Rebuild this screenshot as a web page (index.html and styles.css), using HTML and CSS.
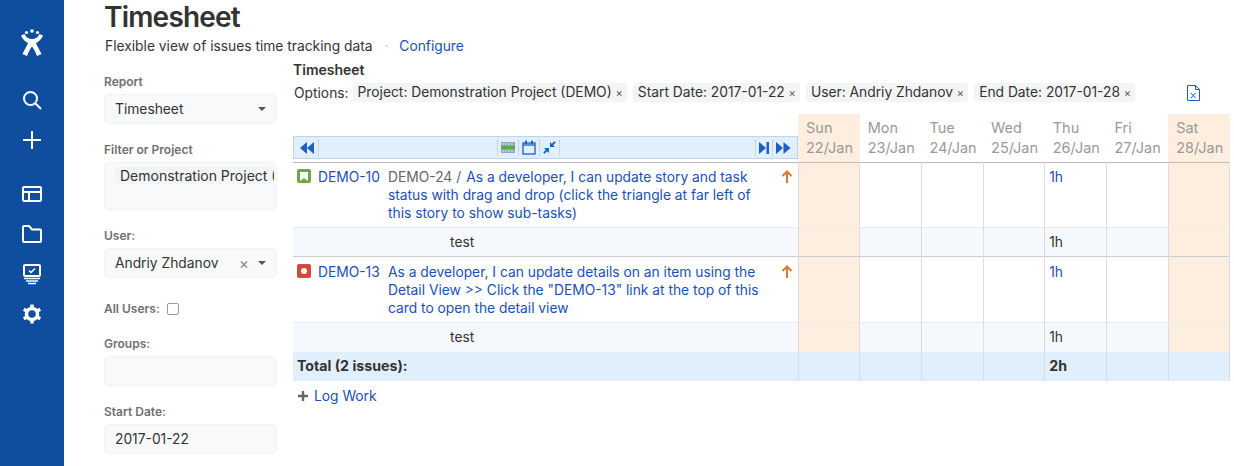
FILE: index.html
```html
<!DOCTYPE html>
<html lang="en">
<head>
    <meta charset="UTF-8">
    <title>Timesheet</title>
    <link rel="stylesheet" href="styles.css">
</head>
<body>
    <nav class="sidebar">
        <svg class="logo" width="22" height="27" viewBox="0 0 22 27" fill="#fff">
            <circle cx="11" cy="2" r="1.800"/><circle cx="5.500" cy="3.500" r="1.600"/><circle cx="16.500" cy="3.500" r="1.600"/>
            <path d="M0 6.500 L3.500 5 C5 8.500 7.500 10 11 10 C14.500 10 17 8.500 18.500 5 L22 6.500 C20.500 10 18 12.500 15 14 C16.500 17.500 18.500 21 20.500 25 L16 27 C14.500 23 13 20 11 17.500 C9 20 7.500 23 6 27 L1.500 25 C3.500 21 5.500 17.500 7 14 C4 12.500 1.500 10 0 6.500 Z"/>
        </svg>
        <svg class="nav-icon first" width="22" height="22" viewBox="0 0 22 22" fill="none" stroke="#fff" stroke-width="2"><circle cx="9.500" cy="9.500" r="6.500"/><path d="M14.500 14.500 L20 20"/></svg>
        <svg class="nav-icon" width="22" height="22" viewBox="0 0 22 22" fill="none" stroke="#fff" stroke-width="2"><path d="M11 2 V20 M2 11 H20"/></svg>
        <svg class="nav-icon second" width="22" height="22" viewBox="0 0 22 22" fill="none" stroke="#fff" stroke-width="2"><rect x="2" y="4" width="18" height="14" rx="1"/><path d="M2 9 H20 M8 9 V18"/></svg>
        <svg class="nav-icon" width="22" height="22" viewBox="0 0 22 22" fill="none" stroke="#fff" stroke-width="2"><path d="M2 18 V4 C2 3.500 2.500 3 3 3 H8 L11 6.500 H19 C19.500 6.500 20 7 20 7.500 V18 C20 18.500 19.500 19 19 19 H3 C2.500 19 2 18.500 2 18 Z"/></svg>
        <svg class="nav-icon" width="22" height="22" viewBox="0 0 22 22" fill="none" stroke="#fff" stroke-width="2"><rect x="3" y="2" width="16" height="11" rx="1"/><path d="M8 7.500 L10 9.500 L14 5.500" stroke-width="1.500"/><path d="M3 15.500 H19 M5 18 H17 M7 20.500 H15" stroke-width="1.500"/></svg>
        <svg class="nav-icon" width="22" height="22" viewBox="0 0 22 22" fill="none" stroke="#fff"><circle cx="11" cy="11" r="5.500" stroke-width="3.500"/><path d="M11 1.500 V4.500 M11 17.500 V20.500 M2.800 6.250 L5.400 7.750 M16.600 14.250 L19.200 15.750 M2.800 15.750 L5.400 14.250 M16.600 7.750 L19.200 6.250" stroke-width="3.500"/></svg>
    </nav>

    <main class="main">
        <h1>Timesheet</h1>
        <p class="subtitle">Flexible view of issues time tracking data <span class="dot">·</span> <a href="#">Configure</a></p>

        <div class="content">
            <form class="form">
                <label>Report</label>
                <div class="field"><span class="grow">Timesheet</span><span class="caret"></span></div>

                <label>Filter or Project</label>
                <div class="field tall"><span class="tag">Demonstration Project (DEMO)</span></div>

                <label>User:</label>
                <div class="field"><span class="grow">Andriy Zhdanov</span><span class="clear">×</span><span class="caret"></span></div>

                <div class="check-row"><label>All Users:</label><span class="checkbox"></span></div>

                <label>Groups:</label>
                <div class="field"></div>

                <label>Start Date:</label>
                <div class="field">2017-01-22</div>
            </form>

            <section class="report">
                <h2>Timesheet</h2>
                <div class="options">
                    <span class="options-label">Options:</span>
                    <span class="chip">Project: Demonstration Project (DEMO) <b>×</b></span>
                    <span class="chip">Start Date: 2017-01-22 <b>×</b></span>
                    <span class="chip">User: Andriy Zhdanov <b>×</b></span>
                    <span class="chip">End Date: 2017-01-28 <b>×</b></span>
                    <svg class="xls" width="13" height="16" viewBox="0 0 13 16" fill="none" stroke="#1a5fc4"><path d="M.5.500 H8.500 L12.500 4.500 V15.500 H.5 Z M8.500.500 V4.500 H12.500"/><path d="M4 8 L8.500 13 M8.500 8 L4 13"/></svg>
                </div>

                <table class="sheet">
                    <colgroup>
                        <col class="col-issue">
                        <col class="col-day"><col class="col-day"><col class="col-day"><col class="col-day"><col class="col-day"><col class="col-day"><col class="col-day">
                    </colgroup>
                    <thead>
                        <tr>
                            <th class="tool-cell">
                                <div class="toolbar">
                                    <svg width="16" height="12" viewBox="0 0 16 12" fill="#1a5fc4"><path d="M8 0 V12 L1 6 Z M15 0 V12 L8 6 Z"/></svg>
                                    <span class="sep"></span>
                                    <span class="grow"></span>
                                    <span class="sep"></span>
                                    <svg width="14" height="11" viewBox="0 0 14 11"><rect width="14" height="11" fill="#8fa6bc"/><rect y="4" width="14" height="3" fill="#5aaa4a"/><path d="M1 2 H13 M1 9 H13" stroke="#dfeaf5" stroke-dasharray="2 1"/></svg>
                                    <span class="sep"></span>
                                    <svg width="14" height="15" viewBox="0 0 14 15" fill="none" stroke="#1a5fc4" stroke-width="1.300"><rect x="1" y="3" width="12" height="11"/><path d="M1 5 H13"/><path d="M4 0.500 V4 M10 0.500 V4" stroke-width="1.800"/></svg>
                                    <span class="sep"></span>
                                    <svg width="13" height="13" viewBox="0 0 13 13" fill="#1a5fc4"><path d="M6 7 V12 L4.200 10.200 L1.600 12.800 L0.200 11.400 L2.800 8.800 L1 7 Z M7 6 V1 L8.800 2.800 L11.400 0.200 L12.800 1.600 L10.200 4.200 L12 6 Z"/></svg>
                                    <span class="sep"></span>
                                    <span class="grow-fixed"></span>
                                    <span class="sep"></span>
                                    <svg width="10" height="12" viewBox="0 0 10 12" fill="#1a5fc4"><path d="M0 0 L7 6 L0 12 Z M7.500 0 H10 V12 H7.500 Z"/></svg>
                                    <span class="sep"></span>
                                    <svg width="15" height="12" viewBox="0 0 15 12" fill="#1a5fc4"><path d="M0 0 L7 6 L0 12 Z M7.500 0 L14.500 6 L7.500 12 Z"/></svg>
                                </div>
                            </th>
                            <th class="day off">Sun<br>22/Jan</th>
                            <th class="day">Mon<br>23/Jan</th>
                            <th class="day">Tue<br>24/Jan</th>
                            <th class="day">Wed<br>25/Jan</th>
                            <th class="day">Thu<br>26/Jan</th>
                            <th class="day">Fri<br>27/Jan</th>
                            <th class="day off">Sat<br>28/Jan</th>
                        </tr>
                    </thead>
                    <tbody>
                        <tr class="issue">
                            <td>
                                <div class="issue-line">
                                    <span class="type story"><svg width="8" height="9" viewBox="0 0 8 9" fill="#fff"><path d="M0 0 H8 V9 L4 6 L0 9 Z"/></svg></span>
                                    <a href="#" class="key">DEMO-10</a>
                                    <span class="summary"><span class="parent">DEMO-24</span><span class="slash">/</span><a href="#">As a developer, I can update story and task status with drag and drop (click the triangle at far left of this story to show sub-tasks)</a></span>
                                    <svg class="prio" width="12" height="13" viewBox="0 0 12 13" fill="none" stroke="#d9792b" stroke-width="2"><path d="M6 13 V2 M1.500 6 L6 1.500 L10.500 6"/></svg>
                                </div>
                            </td>
                            <td class="off"></td><td></td><td></td><td></td><td class="hours"><a href="#">1h</a></td><td></td><td class="off"></td>
                        </tr>
                        <tr class="worklog">
                            <td class="log-text">test</td>
                            <td class="off"></td><td></td><td></td><td></td><td class="hours">1h</td><td></td><td class="off"></td>
                        </tr>
                        <tr class="issue second-issue">
                            <td>
                                <div class="issue-line">
                                    <span class="type bug"><span class="bug-dot"></span></span>
                                    <a href="#" class="key">DEMO-13</a>
                                    <span class="summary"><a href="#">As a developer, I can update details on an item using the Detail View &gt;&gt; Click the "DEMO-13" link at the top of this card to open the detail view</a></span>
                                    <svg class="prio" width="12" height="13" viewBox="0 0 12 13" fill="none" stroke="#d9792b" stroke-width="2"><path d="M6 13 V2 M1.500 6 L6 1.500 L10.500 6"/></svg>
                                </div>
                            </td>
                            <td class="off"></td><td></td><td></td><td></td><td class="hours"><a href="#">1h</a></td><td></td><td class="off"></td>
                        </tr>
                        <tr class="worklog">
                            <td class="log-text">test</td>
                            <td class="off"></td><td></td><td></td><td></td><td class="hours">1h</td><td></td><td class="off"></td>
                        </tr>
                        <tr class="total">
                            <td>Total (2 issues):</td>
                            <td></td><td></td><td></td><td></td><td class="hours">2h</td><td></td><td></td>
                        </tr>
                    </tbody>
                </table>

                <div class="log-work">
                    <svg width="10" height="10" viewBox="0 0 10 10" fill="#666"><path d="M3.800 0 H6.200 V3.800 H10 V6.200 H6.200 V10 H3.800 V6.200 H0 V3.800 H3.800 Z"/></svg>
                    <a href="#">Log Work</a>
                </div>
            </section>
        </div>
    </main>
</body>
</html>
```

FILE: styles.css
```css
html, body {
    height: 466px;
    overflow: hidden;
}
body {
    margin: 0;
    display: flex;
    font-family: "Inter", "Liberation Sans", sans-serif;
    font-size: 13.800px;
    color: #333;
    background: #fff;
}
a {
    color: #1a4fb8;
    text-decoration: none;
}

/* sidebar */
.sidebar {
    width: 64px;
    flex: none;
    background: #0f4e9f;
    display: flex;
    flex-direction: column;
    align-items: center;
    padding-top: 29px;
    box-sizing: border-box;
}
.logo {
    margin-bottom: 33px;
}
.nav-icon {
    margin-bottom: 18px;
}
.nav-icon.second {
    margin-top: 14px;
}

/* main */
.main {
    flex: 1;
    min-width: 0;
    padding-left: 40px;
}
h1 {
    margin: 0;
    font-size: 28px;
    line-height: 34px;
    font-weight: 600;
    letter-spacing: -0.800px;
}
.subtitle {
    margin: 3px 0 0 1px;
    line-height: 18px;
    color: #333;
}
.subtitle a {
    margin-left: 7px;
}
.dot {
    margin-left: 8px;
    color: #bbb;
}
.content {
    display: flex;
    gap: 16px;
    margin-top: 6px;
}

/* left form */
.form {
    width: 173px;
    flex: none;
    padding-top: 12px;
}
.form label {
    display: block;
    font-size: 12px;
    line-height: 16px;
    font-weight: 600;
    color: #707070;
    padding-top: 1px;
    margin-bottom: 4px;
}
.field {
    height: 30px;
    box-sizing: border-box;
    display: flex;
    align-items: center;
    padding: 0 10px;
    margin-bottom: 17px;
    color: #333;
    background: #f8f9fb;
    border: 1px solid #f1f2f4;
    border-radius: 5px;
    overflow: hidden;
    white-space: nowrap;
}
.field.tall {
    height: 48px;
    align-items: flex-start;
    padding: 4px 0 0 10px;
}
.tag {
    flex: none;
    width: 154px;
    overflow: hidden;
    font-size: 14px;
    background: #f3f4f6;
    padding-left: 5px;
    border-radius: 3px;
}
.grow {
    flex: 1;
}
.caret {
    width: 0;
    height: 0;
    border-left: 4px solid transparent;
    border-right: 4px solid transparent;
    border-top: 4px solid #555;
}
.clear {
    color: #888;
    font-size: 15px;
    margin-right: 9px;
}
.check-row {
    display: flex;
    align-items: center;
    gap: 7px;
    margin: 23px 0 18px;
}
.check-row label {
    margin: 0;
    padding: 0;
}
.checkbox {
    width: 10px;
    height: 10px;
    border: 1px solid #999;
    border-radius: 2px;
}

/* report */
.report {
    flex: 1;
    min-width: 0;
}
h2 {
    margin: 0;
    font-size: 14px;
    line-height: 17px;
    font-weight: 600;
    color: #333;
}
.options {
    display: flex;
    align-items: center;
    gap: 6px;
    margin: 5px 0 0 1px;
    white-space: nowrap;
}
.options-label {
    margin-right: -2px;
}
.chip {
    background: #f3f4f6;
    border-radius: 3px;
    padding: 0 4px 0 5px;
    line-height: 18px;
}
.chip b {
    font-weight: 400;
    font-size: 11px;
    color: #555;
}
.xls {
    margin-left: 46px;
}

/* table */
.sheet {
    border-collapse: collapse;
    table-layout: fixed;
    width: 937px;
    margin-top: 12px;
}
.col-issue {
    width: 505px;
}
.col-day {
    width: 61.700px;
}
thead tr {
    border-bottom: 1px solid #bbb;
}
th {
    font-weight: 400;
    padding: 0;
}
.tool-cell {
    vertical-align: bottom;
    padding-bottom: 3px;
}
.toolbar {
    height: 23px;
    display: flex;
    align-items: center;
    gap: 3px;
    padding: 0 6px 0 5px;
    background: #e1eefb;
    border: 1px solid #bcd6ee;
    box-sizing: border-box;
}
.sep {
    height: 16px;
    border-left: 1px dotted #bbb;
}
.grow-fixed {
    width: 189px;
    flex: none;
}
.day {
    height: 48px;
    text-align: left;
    padding-left: 8px;
    font-size: 14.500px;
    color: #999;
    line-height: 20px;
    vertical-align: middle;
}
.off {
    background: #fdeee0;
}
td {
    padding: 0;
    border-right: 1px solid #ddd;
    vertical-align: top;
}
.issue td {
    height: 65px;
    box-sizing: border-box;
    padding-top: 5px;
    line-height: 18px;
}
.second-issue td {
    height: 66px;
    padding-top: 6px;
}
.second-issue {
    border-top: 1px solid #ccc;
}
.hours {
    padding-left: 4px;
    line-height: 28px;
}
.issue-line {
    display: flex;
    padding: 0 4px;
}
.type {
    width: 14px;
    height: 14px;
    margin-top: 1px;
    flex: none;
    border-radius: 2px;
    display: flex;
    align-items: center;
    justify-content: center;
}
.story {
    background: #6ea843;
}
.bug {
    background: #d14b3d;
}
.bug-dot {
    width: 6px;
    height: 6px;
    border-radius: 50%;
    background: #fff;
}
.key {
    margin-left: 7px;
    width: 70px;
    flex: none;
    white-space: nowrap;
}
.summary {
    flex: 1;
    padding-right: 17px;
}
.parent, .slash {
    color: #666;
}
.slash {
    margin: 0 5px 0 4px;
}
.prio {
    margin-top: 2px;
    margin-right: 1px;
    flex: none;
}
.worklog td {
    height: 29px;
    box-sizing: border-box;
    line-height: 28px;
}
.worklog {
    background: #f5f8fc;
    border-top: 1px solid #e8ecf0;
}
.log-text {
    padding-left: 157px;
    color: #333;
}
.total {
    background: #e1eefb;
    font-size: 14.200px;
    font-weight: 700;
}
.total td {
    height: 29px;
    box-sizing: border-box;
    padding-left: 4px;
    line-height: 28px;
    border-right-color: #d3dde8;
}
.log-work {
    display: flex;
    align-items: center;
    gap: 6px;
    margin: 5px 0 0 5px;
    line-height: 20px;
}
```
